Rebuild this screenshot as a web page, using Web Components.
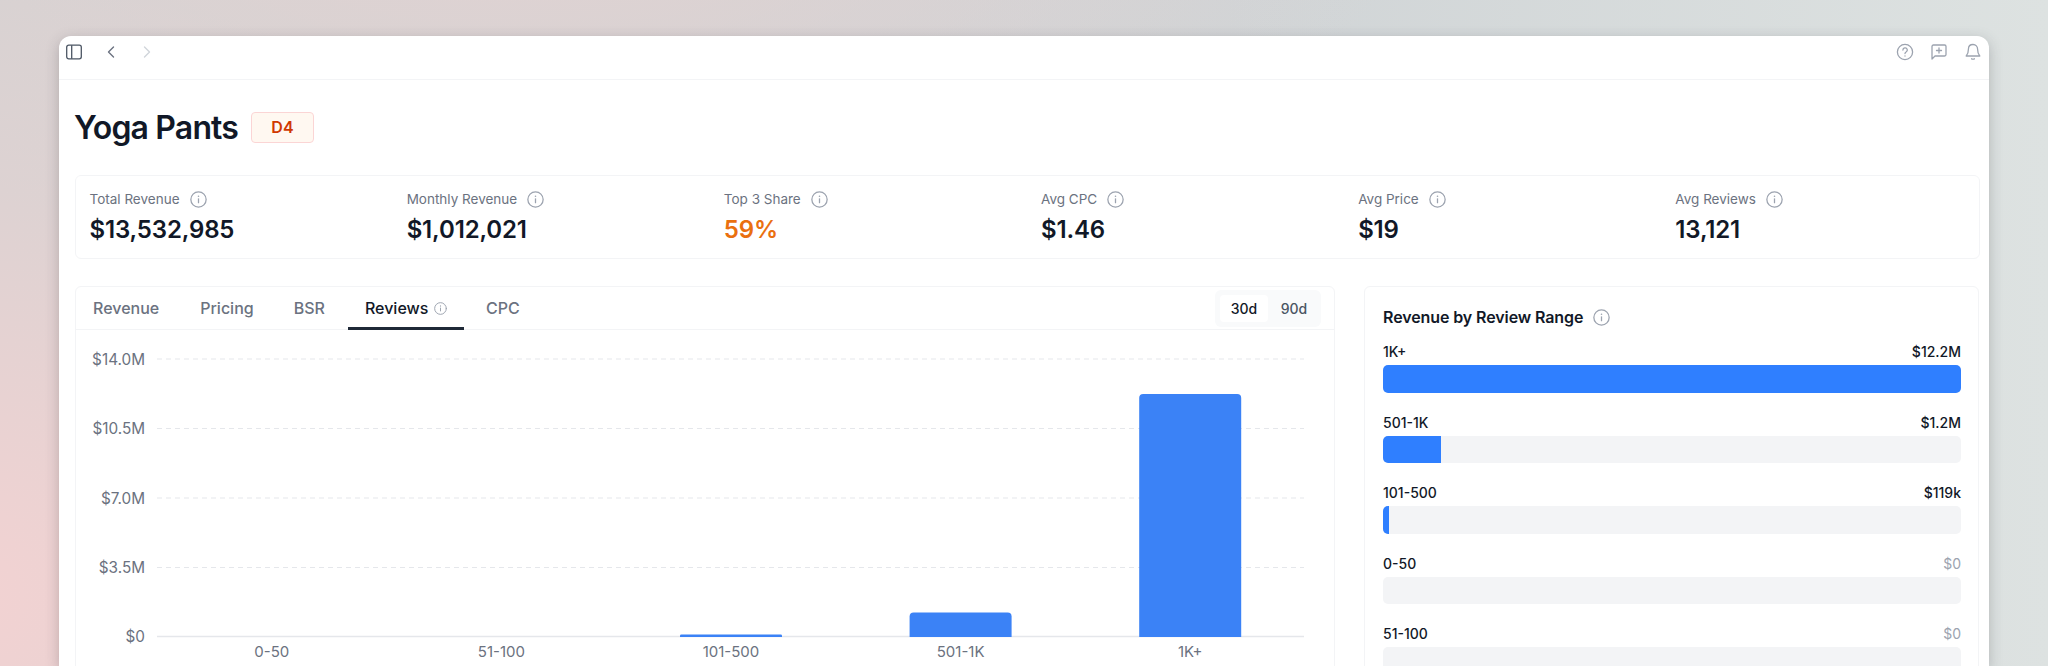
<!DOCTYPE html>
<html><head><meta charset="utf-8">
<style>
html,body{margin:0;padding:0;height:666px;overflow:hidden}
body{font-family:Inter,"Liberation Sans",sans-serif;background:
 radial-gradient(900px 620px at -60px 600px,#f3d2d2 0%,rgba(243,210,210,0) 100%),
 radial-gradient(900px 300px at 500px -60px,#e0d2d2 0%,rgba(224,210,210,0) 100%),
 linear-gradient(90deg,#d2d2d2 0%,#d0d4d6 60%,#dde2e1 100%);}
</style></head><body>
<app-window>
  <top-bar></top-bar>
  <page-title badge="D4">Yoga Pants</page-title>
  <stat-strip>
    <stat-card label="Total Revenue">$13,532,985</stat-card>
    <stat-card label="Monthly Revenue">$1,012,021</stat-card>
    <stat-card label="Top 3 Share" accent>59%</stat-card>
    <stat-card label="Avg CPC">$1.46</stat-card>
    <stat-card label="Avg Price">$19</stat-card>
    <stat-card label="Avg Reviews">13,121</stat-card>
  </stat-strip>
  <main-row>
    <chart-card></chart-card>
    <range-card>
      <range-row label="1K+" value="$12.2M" pct="100"></range-row>
      <range-row label="501-1K" value="$1.2M" pct="10"></range-row>
      <range-row label="101-500" value="$119k" pct="1"></range-row>
      <range-row label="0-50" value="$0" pct="0"></range-row>
      <range-row label="51-100" value="$0" pct="0"></range-row>
    </range-card>
  </main-row>
</app-window>
<script>
const INFO=(s,c='#9ca3af')=>`<svg width="${s}" height="${s}" viewBox="0 0 16 16" fill="none" stroke="${c}" stroke-width="1.2" stroke-linecap="round"><circle cx="8" cy="8" r="7.2"/><path d="M8 7.4v3.6"/><path d="M8 4.9v.1" stroke-width="1.5"/></svg>`;
function def(name,css,html,init){
  customElements.define(name,class extends HTMLElement{
    connectedCallback(){
      if(this.shadowRoot)return;
      const r=this.attachShadow({mode:'open'});
      r.innerHTML=`<style>${css}</style>`+(typeof html==='function'?html(this):html);
      if(init)init(this,r);
    }
  });
}
def('app-window',`:host{display:block;margin:36px 59px 0;height:630px;background:#fff;border-radius:12px 12px 0 0;box-shadow:0 4px 14px rgba(60,60,70,.28);overflow:hidden}`,`<slot></slot>`);
def('top-bar',`:host{display:flex;align-items:flex-start;justify-content:space-between;height:35px;padding-top:7px;padding-bottom:1px;border-bottom:1px solid #f3f4f6;padding-left:7px;padding-right:7px;box-sizing:content-box}
.g{display:flex;align-items:center} svg{display:block;fill:none}
.l svg:nth-child(2){margin-left:24px}.l svg:nth-child(3){margin-left:26px}
.r{gap:16px}`,`
<div class="g l" style="margin-top:1px">
<svg width="16" height="16" viewBox="0 0 16 16" stroke="#4b5563" stroke-width="1.3"><rect x=".7" y="1.2" width="14.6" height="13.6" rx="2"/><path d="M5.7 1.2v13.6"/></svg>
<svg width="10" height="14" viewBox="0 0 10 14" stroke="#6b7280" stroke-width="1.4" stroke-linecap="round" stroke-linejoin="round"><path d="M7.5 2 2.5 7l5 5"/></svg>
<svg width="10" height="14" viewBox="0 0 10 14" stroke="#d1d5db" stroke-width="1.4" stroke-linecap="round" stroke-linejoin="round"><path d="m2.5 2 5 5-5 5"/></svg>
</div>
<div class="g r">
<svg width="18" height="18" viewBox="0 0 18 18" stroke="#9ca3af" stroke-width="1.3" stroke-linecap="round"><circle cx="9" cy="9" r="7.6"/><path d="M6.9 7a2.200 2.200 0 1 1 3.200 2c-.7.4-1.100.8-1.100 1.600"/><path d="M9 13v.1"/></svg>
<svg width="18" height="18" viewBox="0 0 18 18" stroke="#9ca3af" stroke-width="1.3" stroke-linecap="round" stroke-linejoin="round"><path d="M2 3.400C2 2.600 2.600 2 3.400 2h11.200c.8 0 1.400.6 1.400 1.400v8.200c0 .8-.6 1.400-1.400 1.400H5l-3 3z"/><path d="M9 5v5M6.500 7.500h5"/></svg>
<svg width="18" height="18" viewBox="0 0 18 18" stroke="#9ca3af" stroke-width="1.3" stroke-linecap="round" stroke-linejoin="round"><path d="M9 1.500c-2.800 0-4.600 2-4.600 4.700 0 3.600-.7 5.200-2.200 6.800h13.600c-1.500-1.600-2.200-3.200-2.200-6.800 0-2.700-1.800-4.700-4.600-4.700z"/><path d="M7.600 15.800c.4.500 2.400.500 2.800 0"/></svg>
</div>`);
def('page-title',`:host{display:flex;align-items:center;gap:13px;padding:32px 0 31px 15px;height:32px;box-sizing:content-box}
h1{margin:0;font:600 32px/32px Inter,sans-serif;letter-spacing:-.85px;color:#111827}
.b{width:63px;height:31px;margin-bottom:1px;box-sizing:border-box;border:1px solid #fbd5d5;background:#fff8f1;border-radius:4px;color:#d03801;font:600 16px/29px Inter,sans-serif;letter-spacing:.3px;text-align:center}`,
 e=>`<h1><slot></slot></h1><span class="b">${e.getAttribute('badge')}</span>`);
def('stat-strip',`:host{display:grid;grid-template-columns:repeat(6,1fr);margin:0 9px 0 16px;height:84px;border:1px solid #f3f4f6;border-radius:6px;box-sizing:border-box}`,`<slot></slot>`);
def('stat-card',`:host{display:block;padding:13px 0 0 13.5px}
.l{display:flex;align-items:center;gap:10px;font:400 13.5px/20px Inter,sans-serif;color:#6b7280}
svg{display:block}
.v{font:600 24px/32px Inter,sans-serif;color:#111827;letter-spacing:-.15px;margin-top:5px}
:host([accent]) .v{color:#ea700f}`,
 e=>`<div class="l">${e.getAttribute('label')}${INFO(17)}</div><div class="v"><slot></slot></div>`);
def('main-row',`:host{display:flex;gap:29px;margin:27px 10px 0 16px;align-items:stretch}`,`<slot></slot>`);
def('chart-card',`:host{display:block;width:1260px;flex:none;height:420px;border:1px solid #f3f4f6;border-radius:6px;box-sizing:border-box}
.tabs{display:flex;align-items:center;height:42px;border-bottom:1px solid #f3f4f6;padding:0 13px 0 0;box-sizing:content-box}
.t{display:flex;align-items:center;gap:6px;height:42px;padding:0 18px 0 17px;box-sizing:border-box;font:500 16px/42px Inter,sans-serif;color:#6b7280;margin-right:5px}
.t:first-child{margin-right:6px}
.t.a{color:#111827;border-bottom:3px solid #1f2937;padding-top:2px;padding-right:14px;margin-bottom:-1px;height:43px;width:116px;margin-right:5px}
.sp{flex:1}
.tog{display:flex;gap:4px;padding:5px;background:#f9fafb;border-radius:6px;margin-top:1px}
.tog span{width:48px;height:27px;border-radius:4px;font:500 14px/27px Inter,sans-serif;text-align:center;color:#4b5563}
.tog span:first-child{background:#fff;color:#111827;}
.tog span:last-child{width:44px}
svg{display:block}.c text{font:400 15px Inter,sans-serif;fill:#6b7280}`,
 ()=>{
  const x=i=>195.8+229.6*i-51;
  const base=307;
  let g=`<svg class="c" width="1258" height="370" viewBox="0 0 1258 370">`;
  [['$14.0M',29],['$10.5M',98.5],['$7.0M',168],['$3.5M',237.5],['$0',306.5]].forEach(([t,y],i)=>{
    g+=`<text x="69" y="${y+5.5}" text-anchor="end" style="font-size:15.3px">${t}</text>`;
    g+=i<4?`<path d="M81 ${y}H1228" stroke="#e5e7eb" stroke-dasharray="5 4" stroke-width="1"/>`:`<path d="M81 ${y}H1228" stroke="#e5e7eb" stroke-width="1.5"/>`;
  });
  [[2,2.5],[3,24.5],[4,243]].forEach(([i,h])=>{
    const r=Math.min(4,h/2), y=base-h, X=x(i);
    g+=`<path fill="#3b82f6" d="M${X} ${base}V${y+r}a${r} ${r} 0 0 1 ${r}-${r}H${X+102-r}a${r} ${r} 0 0 1 ${r} ${r}V${base}z"/>`;
  });
  ['0-50','51-100','101-500','501-1K','1K+'].forEach((t,i)=>{g+=`<text x="${195.8+229.6*i}" y="327" text-anchor="middle">${t}</text>`});
  g+='</svg>';
  return `<div class="tabs"><div class="t">Revenue</div><div class="t">Pricing</div><div class="t">BSR</div><div class="t a">Reviews ${INFO(13)}</div><div class="t">CPC</div><div class="sp"></div><div class="tog"><span>30d</span><span>90d</span></div></div>${g}`;
 });
def('range-card',`:host{display:block;flex:1;height:420px;border:1px solid #f3f4f6;border-radius:6px;padding:20px 17px 0 18px;box-sizing:border-box}
.h{display:flex;align-items:center;gap:10px;font:600 16px/20px Inter,sans-serif;letter-spacing:-.1px;color:#111827;margin-bottom:16px}
svg{display:block}.rows{display:flex;flex-direction:column;gap:21px}`,
 ()=>`<div class="h">Revenue by Review Range ${INFO(17)}</div><div class="rows"><slot></slot></div>`);
def('range-row',`:host{display:block}
.top{display:flex;justify-content:space-between;font:500 14px/18px Inter,sans-serif;color:#111827;height:18px;margin-bottom:4px}
.z{color:#9ca3af;font-weight:400}
.tr{height:27.5px;background:#f3f4f6;border-radius:5px;overflow:hidden}
.f{height:100%;background:#2f7fff}`,
 e=>{const v=e.getAttribute('value');const p=+e.getAttribute('pct');return `<div class="top"><span>${e.getAttribute('label')}</span><span class="${v==='$0'?'z':''}">${v}</span></div><div class="tr"><div class="f" style="width:${p}%"></div></div>`});
</script>
</body></html>
